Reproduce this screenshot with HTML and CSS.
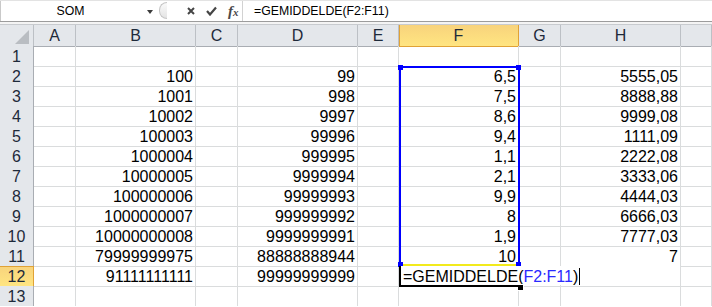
FILE: index.html
```html
<!DOCTYPE html>
<html lang="nl">

<head>
  <meta charset="UTF-8">
  <title>Blad1 - GEMIDDELDE</title>
  <link rel="stylesheet" href="styles.css">
</head>

<body>
  <div class="formula-bar">
    <div class="name-box"><span class="name">SOM</span><span class="drop"></span></div>
    <div class="grip"></div>
    <div class="tools">
      <svg class="cancel" width="8" height="8" viewBox="0 0 8 8">
        <path d="M1 1 L7 7 M7 1 L1 7" stroke="#454545" stroke-width="2" fill="none" />
      </svg>
      <svg class="enter" width="11" height="10" viewBox="0 0 11 10">
        <path d="M1 5 L4 8.5 L10 1.5" stroke="#454545" stroke-width="2.2" fill="none" />
      </svg>
      <span class="fx">f<small>x</small></span>
    </div>
    <div class="formula">=GEMIDDELDE(F2:F11)</div>
  </div>
  <div class="bar-edge"></div>

  <div class="sheet">
    <div class="row head">
      <div class="corner"><i></i></div>
      <div>A</div><div>B</div><div>C</div><div>D</div><div>E</div>
      <div class="sel">F</div><div>G</div><div>H</div><div></div>
    </div>
    <div class="row">
      <div class="num">1</div>
      <div></div><div></div><div></div><div></div><div></div><div></div><div></div><div></div><div></div>
    </div>
    <div class="row">
      <div class="num">2</div>
      <div></div><div>100</div><div></div><div>99</div><div></div><div>6,5</div><div></div><div>5555,05</div><div></div>
    </div>
    <div class="row">
      <div class="num">3</div>
      <div></div><div>1001</div><div></div><div>998</div><div></div><div>7,5</div><div></div><div>8888,88</div><div></div>
    </div>
    <div class="row">
      <div class="num">4</div>
      <div></div><div>10002</div><div></div><div>9997</div><div></div><div>8,6</div><div></div><div>9999,08</div><div></div>
    </div>
    <div class="row">
      <div class="num">5</div>
      <div></div><div>100003</div><div></div><div>99996</div><div></div><div>9,4</div><div></div><div>1111,09</div><div></div>
    </div>
    <div class="row">
      <div class="num">6</div>
      <div></div><div>1000004</div><div></div><div>999995</div><div></div><div>1,1</div><div></div><div>2222,08</div><div></div>
    </div>
    <div class="row">
      <div class="num">7</div>
      <div></div><div>10000005</div><div></div><div>9999994</div><div></div><div>2,1</div><div></div><div>3333,06</div><div></div>
    </div>
    <div class="row">
      <div class="num">8</div>
      <div></div><div>100000006</div><div></div><div>99999993</div><div></div><div>9,9</div><div></div><div>4444,03</div><div></div>
    </div>
    <div class="row">
      <div class="num">9</div>
      <div></div><div>1000000007</div><div></div><div>999999992</div><div></div><div>8</div><div></div><div>6666,03</div><div></div>
    </div>
    <div class="row">
      <div class="num">10</div>
      <div></div><div>10000000008</div><div></div><div>9999999991</div><div></div><div>1,9</div><div></div><div>7777,03</div><div></div>
    </div>
    <div class="row">
      <div class="num">11</div>
      <div></div><div>79999999975</div><div></div><div>88888888944</div><div></div><div>10</div><div></div><div>7</div><div></div>
    </div>
    <div class="row">
      <div class="num sel">12</div>
      <div></div><div>91111111111</div><div></div><div>99999999999</div><div></div><div></div><div></div><div></div><div></div>
    </div>
    <div class="row">
      <div class="num">13</div>
      <div></div><div></div><div></div><div></div><div></div><div></div><div></div><div></div><div></div>
    </div>

    <!-- reference box F2:F11 -->
    <div class="range">
      <i class="tl"></i><i class="tr"></i><i class="bl"></i><i class="br"></i>
    </div>

    <!-- cell F12 in edit mode -->
    <div class="editor">=GEMIDDELDE(<span class="ref">F2:F11</span>)<span class="caret"></span></div>
  </div>
</body>

</html>
```

FILE: styles.css
```css
* {
  box-sizing: border-box;
  margin: 0;
  padding: 0;
}
body {
  background: #fff;
  font-family: "Liberation Sans", Arial, sans-serif;
  color: #000;
  width: 712px;
  overflow: hidden;
}

/* formula bar */
.formula-bar {
  display: flex;
  height: 22px;
  border-top: 1px solid #e3e3e3;
  border-bottom: 1px solid #9c9c9c;
  font-size: 12.3px;
}
.name-box {
  display: flex;
  align-items: center;
  width: 158px;
  border-left: 1px solid #c9c9c9;
}
.name {
  width: 139px;
  text-align: center;
}
.drop {
  margin-left: 7px;
  margin-top: 2px;
  border-top: 4px solid #3c3c3c;
  border-left: 3.5px solid transparent;
  border-right: 3.5px solid transparent;
}
.grip {
  width: 8px;
  height: 17px;
  margin: 1px 0 0 1px;
  border: 1px solid #c6c6c6;
  border-right: none;
  border-radius: 9px 0 0 9px;
  background: linear-gradient(#fafafa, #e4e4e4);
}
.tools {
  display: flex;
  align-items: center;
  width: 76px;
  padding-left: 20px;
  gap: 11px;
  border-right: 1px solid #d2d2d2;
}
.fx {
  font-family: "Liberation Serif", serif;
  font-style: italic;
  font-weight: bold;
  font-size: 15px;
  color: #4a4a4a;
  line-height: 1;
}
.fx small {
  font-size: 11px;
}
.formula {
  padding-left: 11px;
  line-height: 20px;
}
.bar-edge {
  height: 3px;
  background: #f4f4f4;
  border-bottom: 1px solid #c8cbcf;
}

/* grid */
.sheet {
  position: relative;
  font-size: 16px;
}
.row {
  display: grid;
  grid-template-columns: 34px 42px 120px 42px 120px 41px 120px 42px 120px 1fr;
  height: 20px;
}
.row > div {
  border-right: 1px solid #dadcdd;
  border-bottom: 1px solid #dadcdd;
  text-align: right;
  padding: 1px 2px 0 0;
  line-height: 19px;
  white-space: nowrap;
}
.row.head {
  height: 21px;
}
.row.head > div {
  background: #e4e7eb;
  border-right: 1px solid #bcc0c5;
  border-bottom: 1px solid #a9adb3;
  text-align: center;
  padding: 0;
  line-height: 21px;
  color: #1e2a3a;
}
.row > .num {
  background: #e4e7eb;
  border-right: 1px solid #a9adb3;
  border-bottom: 1px solid #c3c6cb;
  text-align: center;
  padding-right: 0;
  color: #1e2a3a;
}
.row.head > .sel,
.row > .num.sel {
  background: linear-gradient(#f8d37c, #ffe581);
  border-right-color: #e0a236;
  border-bottom-color: #e0a236;
}
.row.head > .sel {
  box-shadow: inset 1px 0 #e0a236;
}
.row > .num.sel {
  box-shadow: inset 0 1px #e0a236;
}
.row.head > .corner {
  display: flex;
  justify-content: flex-end;
  align-items: flex-end;
  padding: 0 4px 2px 0;
}
.corner i {
  border-left: 14px solid transparent;
  border-bottom: 14px solid #b9bdc2;
}

/* reference box */
.range {
  position: absolute;
  left: 399px;
  top: 41px;
  width: 121px;
  height: 200px;
  border: 2px solid #0000ff;
  border-bottom-color: #f2ea1c;
}
.range i {
  position: absolute;
  width: 5px;
  height: 5px;
  background: #0000ff;
}
.range .tl { left: -3px; top: -3px; }
.range .tr { right: -3px; top: -3px; }
.range .bl { left: -3px; bottom: -3px; }
.range .br { right: -3px; bottom: -3px; }

/* active cell editor */
.editor {
  position: absolute;
  left: 399px;
  top: 241px;
  width: 281px;
  height: 19px;
  background: #fff;
  border-left: 2px solid #000;
  padding: 1px 0 0 2px;
  line-height: 19px;
  white-space: nowrap;
}
.editor::after {
  content: "";
  position: absolute;
  left: -2px;
  top: 19px;
  width: 120px;
  height: 2px;
  background: #000;
}
.editor::before {
  content: "";
  position: absolute;
  left: 116px;
  top: 18px;
  width: 5px;
  height: 5px;
  background: #000;
  border: 1px solid #fff;
}
.ref {
  color: #2a2aff;
}
.caret {
  display: inline-block;
  width: 1px;
  height: 17px;
  margin-left: 1px;
  vertical-align: -3px;
  background: #000;
}
```
